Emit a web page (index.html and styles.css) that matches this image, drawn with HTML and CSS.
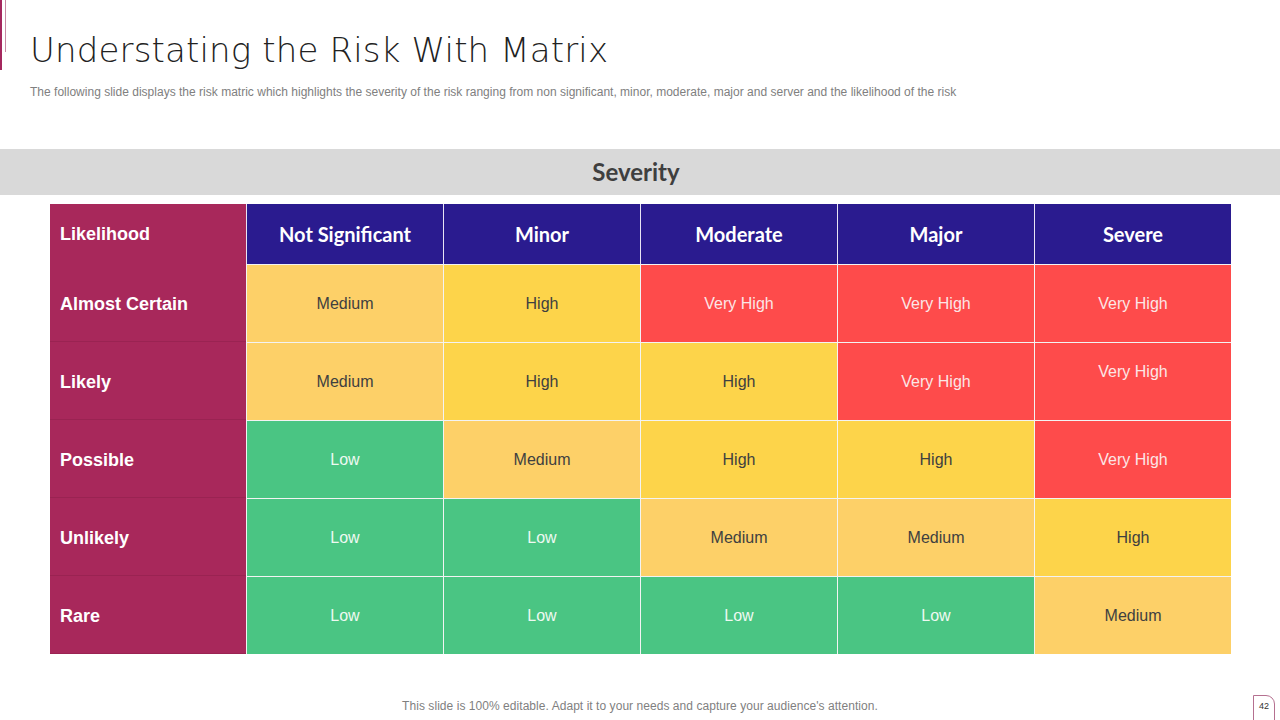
FILE: index.html
```html
<!DOCTYPE html>
<html>
<head>
<meta charset="utf-8">
<link rel="stylesheet" href="styles.css">
</head>
<body>
<div class="slide">
  <div class="accent"><span class="line1"></span><span class="line2"></span></div>
  <header class="head">
    <h1 class="title">Understating the Risk With Matrix</h1>
    <p class="subtitle">The following slide displays the risk matric which highlights the severity of the risk ranging from non significant, minor, moderate, major and server and the likelihood of the risk</p>
  </header>
  <div class="band">Severity</div>
  <div class="matrix">
    <div class="lh hd">Likelihood</div>
    <div class="ch">Not Significant</div>
    <div class="ch">Minor</div>
    <div class="ch">Moderate</div>
    <div class="ch">Major</div>
    <div class="ch">Severe</div>

    <div class="lh">Almost Certain</div>
    <div class="c med">Medium</div>
    <div class="c high">High</div>
    <div class="c vh">Very High</div>
    <div class="c vh">Very High</div>
    <div class="c vh">Very High</div>

    <div class="lh">Likely</div>
    <div class="c med">Medium</div>
    <div class="c high">High</div>
    <div class="c high">High</div>
    <div class="c vh">Very High</div>
    <div class="c vh up">Very High</div>

    <div class="lh">Possible</div>
    <div class="c low">Low</div>
    <div class="c med">Medium</div>
    <div class="c high">High</div>
    <div class="c high">High</div>
    <div class="c vh">Very High</div>

    <div class="lh">Unlikely</div>
    <div class="c low">Low</div>
    <div class="c low">Low</div>
    <div class="c med">Medium</div>
    <div class="c med">Medium</div>
    <div class="c high">High</div>

    <div class="lh">Rare</div>
    <div class="c low">Low</div>
    <div class="c low">Low</div>
    <div class="c low">Low</div>
    <div class="c low">Low</div>
    <div class="c med">Medium</div>
  </div>
  <footer class="foot">
    <span class="note">This slide is 100% editable. Adapt it to your needs and capture your audience's attention.</span>
    <span class="pnum">42</span>
  </footer>
</div>
</body>
</html>
```
FILE: styles.css
```css
* { box-sizing: border-box; }
html, body { margin: 0; padding: 0; background: #fff; }
.slide {
  position: relative;
  width: 1280px;
  height: 720px;
  overflow: hidden;
  font-family: "Liberation Sans", Arial, sans-serif;
  display: flex;
  flex-direction: column;
}
.accent { position: absolute; left: 0; top: 0; }
.accent .line1 { position: absolute; left: 0; top: 0; width: 2px; height: 70px; background: #a4285e; }
.accent .line2 { position: absolute; left: 5px; top: 0; width: 1px; height: 52px; background: #c98aa6; }
.head { padding: 28px 0 0 30px; height: 149px; }
.title {
  margin: 0;
  font-family: "DejaVu Sans", sans-serif;
  font-weight: 200;
  font-size: 34px;
  line-height: 44px;
  color: #222;
  letter-spacing: 0.15px;
}
.subtitle {
  margin: 13px 0 0 0;
  font-size: 12px;
  line-height: 14px;
  color: #808080;
  letter-spacing: 0.01px;
}
.band {
  height: 46px;
  background: #d9d9d9;
  text-align: center;
  font-family: "Lato", sans-serif;
  font-weight: 700;
  font-size: 24px;
  line-height: 46px;
  color: #3f3f3f;
  padding-right: 8px;
}
.matrix {
  margin: 9px 0 0 50px;
  width: 1181px;
  display: grid;
  grid-template-columns: 196px repeat(5, 197px);
  grid-template-rows: 60px repeat(5, 78px);
}
.lh {
  background: #a8285b;
  color: #fff;
  font-weight: 700;
  font-size: 18px;
  display: flex;
  align-items: center;
  padding: 3px 0 0 10px;
  border-bottom: 1px solid #9a2352;
}
.lh.hd { border-bottom: 0; padding-top: 1px; }
.ch {
  background: #2a1b8f;
  color: #fff;
  font-family: "Lato", sans-serif;
  font-weight: 700;
  font-size: 20px;
  display: flex;
  align-items: center;
  justify-content: center;
  padding-bottom: 1px;
  border-left: 1px solid #e8e4f4;
}
.c {
  display: flex;
  align-items: center;
  justify-content: center;
  font-size: 16px;
  border-left: 1px solid #f3f3f3;
  border-top: 1px solid #f3f3f3;
}
.c.up { align-items: flex-start; padding-top: 20px; }
.med { background: #fdd068; color: #404040; }
.high { background: #fdd44a; color: #404040; }
.vh { background: #fe4b4b; color: #fbe6e6; }
.low { background: #4ac583; color: #eef9f2; }
.foot {
  position: relative;
  margin-top: auto;
  height: 30px;
  text-align: center;
}
.note {
  display: block;
  font-size: 12px;
  color: #7f7f7f;
  line-height: 14px;
  padding-top: 9px;
  letter-spacing: 0.05px;
}
.pnum {
  position: absolute;
  right: 5px;
  top: 5px;
  width: 22px;
  height: 30px;
  border: 1px solid #b57090;
  border-top-right-radius: 9px;
  font-size: 9px;
  color: #333;
  text-align: center;
  line-height: 20px;
}
```
